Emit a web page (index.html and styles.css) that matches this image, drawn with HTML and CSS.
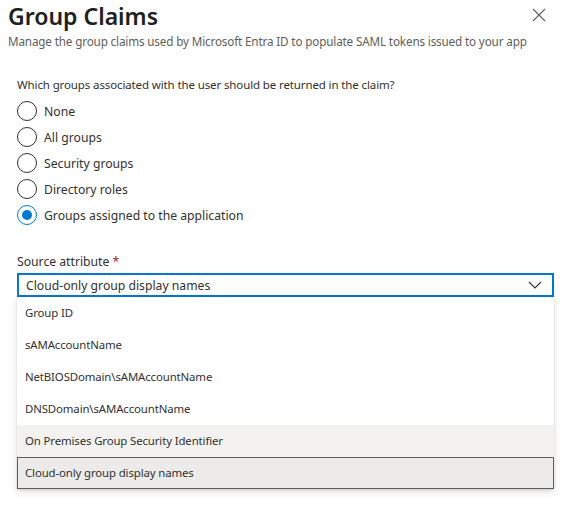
FILE: index.html
```html
<!DOCTYPE html>
<html lang="en">
<head>
    <meta charset="UTF-8">
    <title>Group Claims</title>
    <link rel="stylesheet" href="styles.css">
</head>
<body>
    <div class="panel">
        <header class="panel-header">
            <div>
                <h1>Group Claims</h1>
                <p class="subtitle">Manage the group claims used by Microsoft Entra ID to populate SAML tokens issued to your app</p>
            </div>
            <button class="close-btn" aria-label="Close">
                <svg width="14" height="14" viewBox="0 0 14 14"><path d="M1 1L13 13M13 1L1 13" stroke="#605e5c" stroke-width="1.1" fill="none"/></svg>
            </button>
        </header>

        <div class="content">
            <p class="question">Which groups associated with the user should be returned in the claim?</p>
            <div class="radio-group">
                <label class="radio"><span class="circle"></span>None</label>
                <label class="radio"><span class="circle"></span>All groups</label>
                <label class="radio"><span class="circle"></span>Security groups</label>
                <label class="radio"><span class="circle"></span>Directory roles</label>
                <label class="radio checked"><span class="circle"></span>Groups assigned to the application</label>
            </div>

            <div class="field">
                <p class="field-label">Source attribute <span class="required">*</span></p>
                <div class="dropdown">
                    <span>Cloud-only group display names</span>
                    <svg width="14" height="8" viewBox="0 0 14 8"><path d="M1 1L7 7L13 1" stroke="#323130" stroke-width="1.1" fill="none"/></svg>
                </div>
                <ul class="options">
                    <li>Group ID</li>
                    <li>sAMAccountName</li>
                    <li>NetBIOSDomain\sAMAccountName</li>
                    <li>DNSDomain\sAMAccountName</li>
                    <li class="hover">On Premises Group Security Identifier</li>
                    <li class="selected">Cloud-only group display names</li>
                </ul>
            </div>
        </div>
    </div>
</body>
</html>
```

FILE: styles.css
```css
body {
    margin: 0;
    background-color: #fff;
    font-family: 'Noto Sans', 'Open Sans', sans-serif;
    color: #323130;
    font-size: 12.2px;
}

.panel {
    width: 563px;
    height: 507px;
    overflow: hidden;
}

.panel-header {
    display: flex;
    justify-content: space-between;
    padding: 0 16px 0 8px;
}

h1 {
    margin: 0;
    font-size: 23px;
    font-weight: 600;
    line-height: 32px;
    color: #201f1e;
}

.subtitle {
    margin: 0;
    font-size: 11.7px;
    letter-spacing: -0.15px;
    line-height: 18px;
    color: #605e5c;
    white-space: nowrap;
}

.close-btn {
    background: none;
    border: none;
    padding: 0;
    margin-top: 8px;
    width: 16px;
    height: 16px;
    display: flex;
    align-items: flex-start;
    justify-content: center;
    cursor: pointer;
}

.content {
    padding: 0 9px 0 17px;
}

.question {
    margin: 26px 0 4px;
    font-size: 11.5px;
    letter-spacing: -0.12px;
    line-height: 18px;
}

.radio-group {
    display: flex;
    flex-direction: column;
}

.radio {
    display: flex;
    align-items: center;
    height: 26px;
}

.circle {
    width: 20px;
    height: 20px;
    border: 1px solid #323130;
    border-radius: 50%;
    margin-right: 7px;
    box-sizing: border-box;
    display: inline-flex;
    align-items: center;
    justify-content: center;
}

.radio.checked .circle {
    border-color: #0078d4;
}

.radio.checked .circle::after {
    content: '';
    width: 10px;
    height: 10px;
    border-radius: 50%;
    background-color: #0078d4;
}

.field {
    margin-top: 25px;
}

.field-label {
    margin: 0 0 2px;
    line-height: 18px;
}

.required {
    color: #a4262c;
}

.dropdown {
    height: 24px;
    border: 2px solid #0078d4;
    box-sizing: border-box;
    display: flex;
    align-items: center;
    justify-content: space-between;
    padding: 0 10px 0 7px;
}

.options {
    list-style: none;
    margin: 0;
    padding: 0;
    background-color: #fff;
    box-shadow: 0 3px 7px rgba(0, 0, 0, 0.13), 0 1px 2px rgba(0, 0, 0, 0.1);
}

.options li {
    height: 32px;
    line-height: 32px;
    padding: 0 8px;
    font-size: 11.4px;
    letter-spacing: -0.12px;
    box-sizing: border-box;
}

.options li.hover {
    background-color: #f3f2f1;
}

.options li.selected {
    background-color: #edebe9;
    border: 1px solid #605e5c;
    line-height: 30px;
    padding: 0 7px;
}
```
